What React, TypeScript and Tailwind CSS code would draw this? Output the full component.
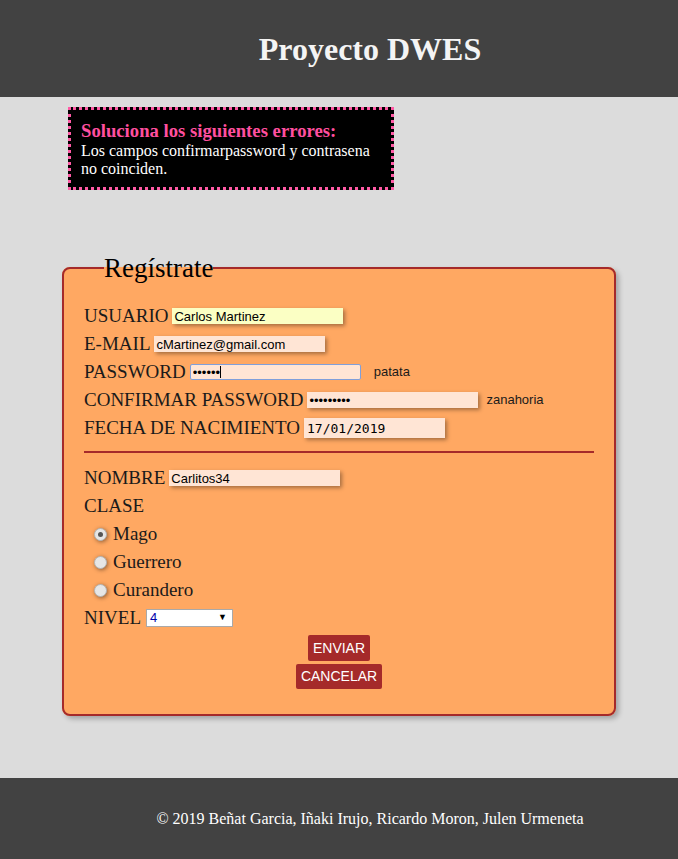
const serif = "font-['Liberation_Serif',serif]";
const sans = "font-['Liberation_Sans',Arial,sans-serif]";
const inputBase =
  "h-4 w-[171px] px-[2px] text-[13px] leading-none text-black shadow-[2px_2px_4px_rgba(0,0,0,0.35)] outline-none " +
  sans;
const inputCls = inputBase + " bg-[#ffe5d5]";

const Radio = ({ checked }: { checked?: boolean }) => (
  <span className="flex h-[13px] w-[13px] items-center justify-center rounded-full border border-[#b5b5b5] bg-[#e6e6e6] shadow-[1px_1px_4px_rgba(0,0,0,0.45)]">
    {checked && <span className="h-[5px] w-[5px] rounded-full bg-[#555]" />}
  </span>
);

const App = () => {
  return (
    <div className={"min-h-[859px] w-[678px] bg-[#dcdcdc] " + serif}>
      <header className="flex h-[97px] items-center justify-center bg-[#424242] pl-[62px]">
        <h1 className="text-[32px] font-bold text-[#f4f4f4]">Proyecto DWES</h1>
      </header>

      <main className="h-[681px] pt-[10px]">
        <div className="ml-[68px] w-[326px] border-[3px] border-dotted border-[#ff5aa5] bg-black px-[10px] pt-[10px] pb-[9px]">
          <p className="text-[18.7px] font-bold leading-[22px] text-[#ff4f9f]">
            Soluciona los siguientes errores:
          </p>
          <p className="text-[16px] leading-[18px] text-white">
            Los campos confirmarpassword y contrasena no coinciden.
          </p>
        </div>

        <fieldset className="mx-auto mt-[60px] w-[554px] rounded-lg border-2 border-[#a52a2a] bg-[#ffa862] px-5 pb-[25px] pt-[16px] shadow-[3px_3px_5px_rgba(0,0,0,0.25)]">
          <legend className="ml-5 text-[27px] leading-9 text-black">Regístrate</legend>

          <div className="text-[19px] text-[#1a1a1a]">
            <div className="flex h-7 items-center gap-1">
              USUARIO
              <input className={inputBase + " bg-[#fbffc4]"} defaultValue="Carlos Martinez" />
            </div>
            <div className="flex h-7 items-center gap-1">
              E-MAIL
              <input className={inputCls} defaultValue="cMartinez@gmail.com" />
            </div>
            <div className="flex h-7 items-center gap-1">
              PASSWORD
              <span className="relative flex">
                <input
                  type="password"
                  className={inputBase + " rounded-[2px] border border-[#7f9fdb] bg-[#ffe5d5] shadow-none"}
                  defaultValue="patata"
                />
                <span className="absolute left-[30px] top-[2px] h-[12px] w-px bg-black" />
              </span>
              <span className={"ml-[9px] text-[13px] " + sans}>patata</span>
            </div>
            <div className="flex h-7 items-center gap-1">
              CONFIRMAR PASSWORD
              <input type="password" className={inputCls} defaultValue="zanahoria" />
              <span className={"ml-[4px] text-[13px] " + sans}>zanahoria</span>
            </div>
            <div className="flex h-7 items-center gap-1">
              FECHA DE NACIMIENTO
              <input
                className="h-5 w-[141px] bg-[#ffe5d5] px-[3px] font-['DejaVu_Sans_Mono',monospace] text-[13px] text-black shadow-[2px_2px_4px_rgba(0,0,0,0.35)] outline-none"
                defaultValue="17/01/2019"
              />
            </div>

            <hr className="mt-[9px] mb-[11px] border-t-2 border-[#a52a2a]" />

            <div className="flex h-7 items-center gap-1">
              NOMBRE
              <input className={inputCls} defaultValue="Carlitos34" />
            </div>
            <div className="flex h-7 items-center">CLASE</div>
            <div className="flex h-7 items-center gap-[6px] pl-[10px]">
              <Radio checked />
              Mago
            </div>
            <div className="flex h-7 items-center gap-[6px] pl-[10px]">
              <Radio />
              Guerrero
            </div>
            <div className="flex h-7 items-center gap-[6px] pl-[10px]">
              <Radio />
              Curandero
            </div>
            <div className="flex h-7 items-center gap-[5px]">
              NIVEL
              <div className={"flex h-[18px] w-[87px] items-center justify-between border border-[#a9a9a9] bg-white pl-[3px] pr-[5px] text-[13px] text-[#0000aa] " + sans}>
                <span>4</span>
                <span className="text-[9px] text-black">▼</span>
              </div>
            </div>
          </div>

          <div className={"mt-[3px] flex flex-col items-center gap-[3px] text-[14px] text-white " + sans}>
            <button className="h-[26px] rounded-[2px] bg-[#a52a2a] px-[5px]">ENVIAR</button>
            <button className="h-[25px] rounded-[2px] bg-[#a52a2a] px-[5px]">CANCELAR</button>
          </div>
        </fieldset>
      </main>

      <footer className="flex h-[81px] items-center justify-center bg-[#424242] pl-[62px] text-[16px] text-white">
        © 2019 Beñat Garcia, Iñaki Irujo, Ricardo Moron, Julen Urmeneta
      </footer>
    </div>
  );
};

export default App;
